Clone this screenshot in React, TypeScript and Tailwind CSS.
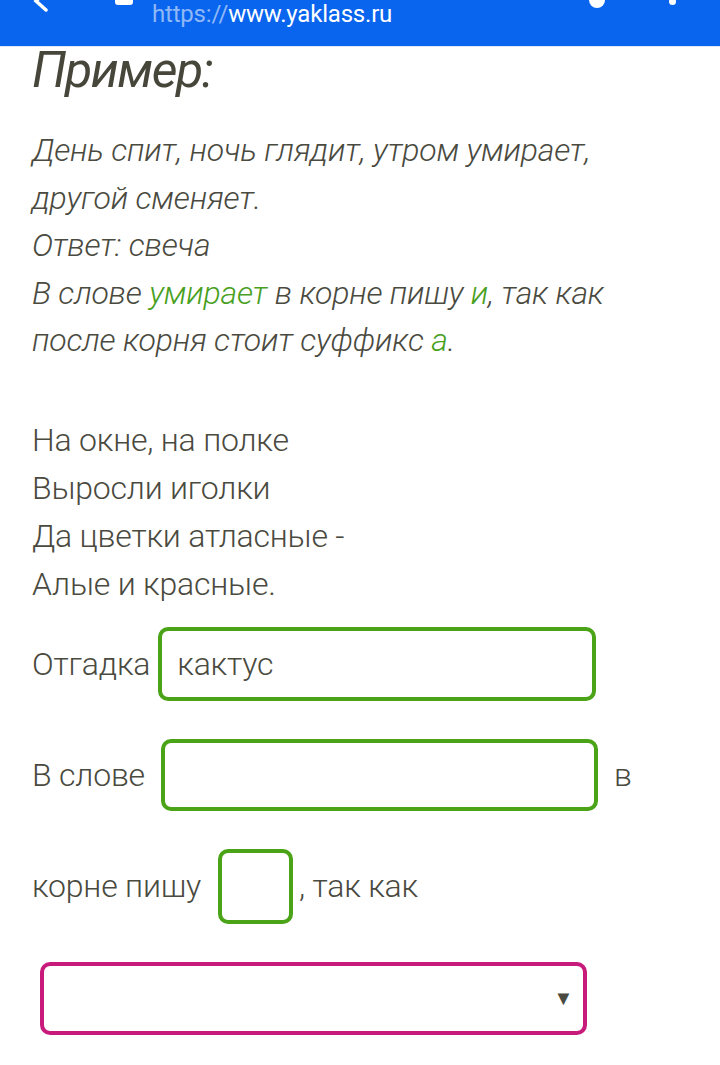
const Header = () => (
  <div className="relative h-[47px] bg-[#0964ee] border-b border-[#dfe7f6] overflow-hidden">
    {/* cut-off toolbar icons */}
    <svg className="absolute left-[30px] top-[-10px]" width="22" height="22" viewBox="0 0 22 22">
      <path d="M16 2 L6 11 L16 20" stroke="white" strokeWidth="3.5" fill="none" strokeLinecap="round" />
    </svg>
    <div className="absolute left-[115px] top-[-6px] w-[18px] h-[11px] rounded-[3px] bg-white" />
    <div className="absolute left-[152px] top-[0px] text-[24px] leading-[28px] font-['Roboto',sans-serif] tracking-[-0.2px]">
      <span className="text-[#8fb8f7]">https://</span>
      <span className="text-white">www.yaklass.ru</span>
    </div>
    <div className="absolute left-[589px] top-[-8px] w-[16px] h-[16px] rounded-full bg-white" />
    <div className="absolute left-[669px] top-[-2px] w-[7px] h-[7px] rounded-full bg-white" />
  </div>
)

const Box = ({ w, h, children }: { w: string; h: string; children?: React.ReactNode }) => (
  <div className={`${w} ${h} border-[4px] border-[#4ba418] rounded-[10px] bg-white flex items-center px-[14px]`}>
    {children}
  </div>
)

export default function App() {
  return (
    <div className="w-[720px] h-[1065px] bg-white overflow-hidden font-['Roboto',sans-serif] text-[#4a4a40]">
      <Header />
      <div className="pl-[32px]">
        <h2 className="italic font-normal text-[50px] leading-[48px] mt-[-1px] tracking-[-1.5px] text-[#46463a]">Пример:</h2>

        <div className="italic font-light text-[32px] leading-[47.5px] mt-[33px] tracking-[-0.2px]">
          <p>День спит, ночь глядит, утром умирает,</p>
          <p>другой сменяет.</p>
          <p>Ответ: свеча</p>
          <p>
            В слове <span className="text-[#48a01e]">умирает</span> в корне пишу{" "}
            <span className="text-[#48a01e]">и</span>, так как
          </p>
          <p>
            после корня стоит суффикс <span className="text-[#48a01e]">а</span>.
          </p>
        </div>

        <div className="font-light text-[32px] leading-[48px] mt-[51px] tracking-[-0.2px]">
          <p>На окне, на полке</p>
          <p>Выросли иголки</p>
          <p>Да цветки атласные -</p>
          <p>Алые и красные.</p>
        </div>

        <div className="font-light text-[32px] tracking-[-0.2px] mt-[19px] flex flex-col gap-[38px]">
          <div className="flex items-center gap-[8px]">
            <span>Отгадка</span>
            <Box w="w-[438px]" h="h-[74px]">
              <span className="pl-[1px]">кактус</span>
            </Box>
          </div>
          <div className="flex items-center">
            <span>В слове</span>
            <div className="ml-[16px]">
              <Box w="w-[437px]" h="h-[72px]" />
            </div>
            <span className="ml-[16px]">в</span>
          </div>
          <div className="flex items-center">
            <span>корне пишу</span>
            <div className="ml-[17px]">
              <Box w="w-[75px]" h="h-[75px]" />
            </div>
            <span className="ml-[6px]">, так как</span>
          </div>
          <div className="ml-[8px] w-[547px] h-[73px] border-[4px] border-[#c81a7b] rounded-[10px] flex items-center justify-end pr-[10px]">
            <span className="text-[20px] text-[#4a4a40]">▼</span>
          </div>
        </div>
      </div>
    </div>
  )
}
